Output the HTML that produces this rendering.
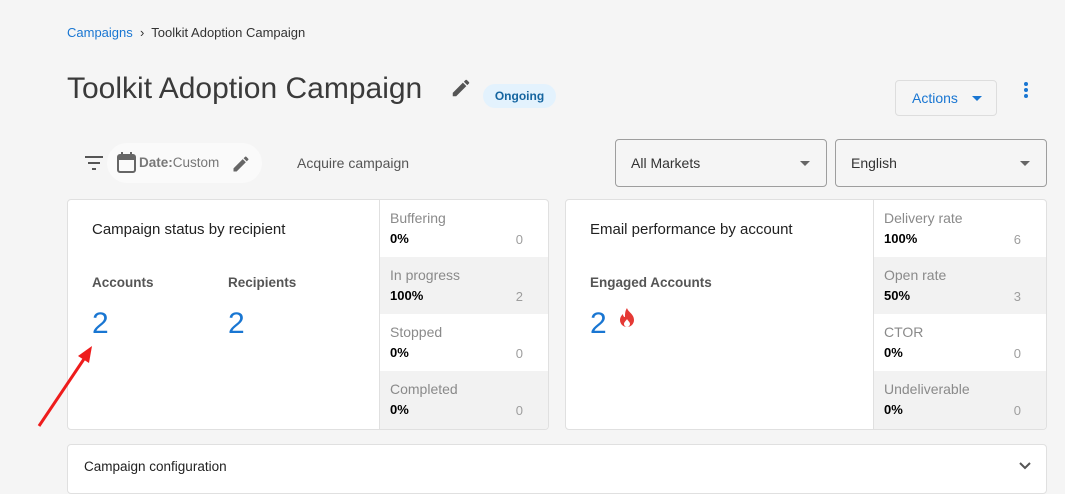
<!DOCTYPE html>
<html><head><style>
*{box-sizing:border-box;margin:0;padding:0}
body{width:1065px;height:484px;overflow:hidden;background:#f5f5f5;font-family:"Liberation Sans",sans-serif;color:#212121;position:relative}
.a{position:absolute}
.card{position:absolute;background:#fff;border:1px solid #e0e0e0;border-radius:4px;overflow:hidden}
.row{position:absolute;left:0;right:0;height:57px;padding:10px 10px 0 10px}
.row .l{font-size:14px;color:#8a8a8a}
.row .v{font-size:13px;font-weight:bold;color:#000;margin-top:5px}
.row .n{position:absolute;right:25px;top:32px;font-size:13px;color:#9e9e9e}
.g{background:#f2f2f2}
.sel{position:absolute;border:1px solid #9e9e9e;border-radius:4px;height:48px;top:139px;font-size:14px;color:#333;padding:15px 15px}
.sel:after{content:"";position:absolute;right:16px;top:21px;border:5px solid transparent;border-top:5px solid #666}
</style></head><body>
<div class="a" style="left:67px;top:25px;font-size:13px;color:#333"><span style="color:#1976d2">Campaigns</span> &nbsp;›&nbsp; Toolkit Adoption Campaign</div>
<div class="a" style="left:67px;top:72px;font-size:30px;font-weight:normal;color:#3a3a3a">Toolkit Adoption Campaign</div>
<svg class="a" style="left:450px;top:77px" width="22" height="22" viewBox="0 0 24 24"><path fill="#555" d="M3 17.25V21h3.75L17.81 9.94l-3.75-3.75L3 17.25zM20.71 7.04a1 1 0 000-1.41l-2.34-2.34a1 1 0 00-1.41 0l-1.83 1.83 3.75 3.75 1.83-1.83z"/></svg>
<div class="a" style="left:483px;top:84px;width:73px;height:24px;border-radius:12px;background:#e3f2fd;color:#1565a0;font-size:12px;font-weight:bold;text-align:center;line-height:24px">Ongoing</div>
<div class="a" style="left:895px;top:80px;width:102px;height:36px;border:1px solid #ddd;border-radius:4px;color:#1976d2;font-size:14px;line-height:34px;padding-left:16px">Actions <span style="display:inline-block;margin-left:10px;border:5px solid transparent;border-top:5px solid #1976d2;vertical-align:-3px"></span></div>
<div class="a" style="left:1024px;top:82px;width:4px">
<div style="width:4px;height:4px;border-radius:2px;background:#1976d2;margin-bottom:2px"></div><div style="width:4px;height:4px;border-radius:2px;background:#1976d2;margin-bottom:2px"></div><div style="width:4px;height:4px;border-radius:2px;background:#1976d2"></div></div>
<svg class="a" style="left:84px;top:154px" width="20" height="18" viewBox="0 0 20 18"><path stroke="#555" stroke-width="2" d="M1 3h18M4 9h12M8 15h4"/></svg>
<div class="a" style="left:107px;top:143px;width:155px;height:40px;border-radius:20px;background:#fafafa"></div>
<svg class="a" style="left:116px;top:151px" width="22" height="24" viewBox="0 0 22 24"><rect x="2" y="4" width="17" height="17" rx="2" fill="none" stroke="#666" stroke-width="2"/><rect x="2" y="4" width="17" height="5" fill="#666"/><path stroke="#666" stroke-width="2" d="M6 1v4M15 1v4"/></svg>
<div class="a" style="left:139px;top:155px;font-size:13.5px;color:#777"><b>Date:</b>Custom</div>
<svg class="a" style="left:231px;top:154px" width="20" height="20" viewBox="0 0 24 24"><path fill="#666" d="M3 17.25V21h3.75L17.81 9.94l-3.75-3.75L3 17.25zM20.71 7.04a1 1 0 000-1.41l-2.34-2.34a1 1 0 00-1.41 0l-1.83 1.83 3.75 3.75 1.83-1.83z"/></svg>
<div class="a" style="left:297px;top:155px;font-size:14px;color:#555">Acquire campaign</div>
<div class="sel" style="left:615px;width:212px">All Markets</div>
<div class="sel" style="left:835px;width:212px">English</div>

<div class="card" style="left:67px;top:199px;width:482px;height:231px">
<div class="a" style="left:24px;top:21px;font-size:15px">Campaign status by recipient</div>
<div class="a" style="left:24px;top:75px;font-size:13.5px;font-weight:bold;color:#555">Accounts</div>
<div class="a" style="left:160px;top:75px;font-size:13.5px;font-weight:bold;color:#555">Recipients</div>
<div class="a" style="left:24px;top:107px;font-size:30px;color:#1976d2">2</div>
<div class="a" style="left:160px;top:107px;font-size:30px;color:#1976d2">2</div>
<div class="a" style="left:311px;top:0;bottom:0;right:0;border-left:1px solid #e0e0e0">
<div class="row" style="top:0"><div class="l">Buffering</div><div class="v">0%</div><div class="n">0</div></div>
<div class="row g" style="top:57px"><div class="l">In progress</div><div class="v">100%</div><div class="n">2</div></div>
<div class="row" style="top:114px"><div class="l">Stopped</div><div class="v">0%</div><div class="n">0</div></div>
<div class="row g" style="top:171px;height:60px"><div class="l">Completed</div><div class="v">0%</div><div class="n">0</div></div>
</div></div>

<div class="card" style="left:565px;top:199px;width:482px;height:231px">
<div class="a" style="left:24px;top:21px;font-size:15px">Email performance by account</div>
<div class="a" style="left:24px;top:75px;font-size:13.5px;font-weight:bold;color:#555">Engaged Accounts</div>
<div class="a" style="left:24px;top:107px;font-size:30px;color:#1976d2">2</div>
<svg class="a" style="left:52px;top:107px" width="18" height="22" viewBox="0 0 18 22"><path fill="#e53935" d="M9 1c1 4 7 6 7 12a7 7 0 01-14 0c0-3 2-5 3-6 0 2 1 3 2 3 0-3 0-6 2-9zm0 11c-1 2-3 3-3 5a3 3 0 006 0c0-2-2-3-3-5z"/></svg>
<div class="a" style="left:307px;top:0;bottom:0;right:0;border-left:1px solid #e0e0e0">
<div class="row" style="top:0"><div class="l">Delivery rate</div><div class="v">100%</div><div class="n">6</div></div>
<div class="row g" style="top:57px"><div class="l">Open rate</div><div class="v">50%</div><div class="n">3</div></div>
<div class="row" style="top:114px"><div class="l">CTOR</div><div class="v">0%</div><div class="n">0</div></div>
<div class="row g" style="top:171px;height:60px"><div class="l">Undeliverable</div><div class="v">0%</div><div class="n">0</div></div>
</div></div>

<div class="card" style="left:67px;top:444px;width:980px;height:50px">
<div class="a" style="left:16px;top:14px;font-size:13.5px">Campaign configuration</div>
<svg class="a" style="left:950px;top:16px" width="14" height="10" viewBox="0 0 14 10"><path d="M2 2l5 5 5-5" stroke="#555" stroke-width="2" fill="none"/></svg>
</div>

<svg class="a" style="left:36px;top:342px" width="62" height="88" viewBox="0 0 62 88"><path d="M3 84L50 14" stroke="#ee1c1c" stroke-width="3"/><path d="M56 4L42 14L53 21Z" fill="#ee1c1c"/></svg>
</body></html>
